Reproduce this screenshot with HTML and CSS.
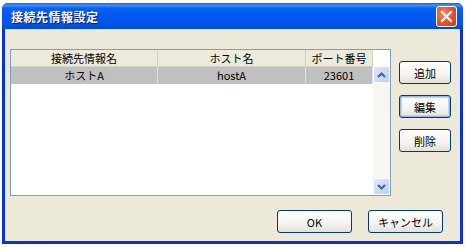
FILE: index.html
```html
<!DOCTYPE html>
<html lang="ja">
<head>
    <meta charset="UTF-8">
    <title>接続先情報設定</title>
    <link rel="stylesheet" href="styles.css">
</head>
<body>
    <div class="window">
        <div class="titlebar">
            <span class="title">接続先情報設定</span>
            <div class="close">
                <svg width="13" height="13" viewBox="0 0 13 13">
                    <path d="M2 2 L11 11 M11 2 L2 11" stroke="#fff" stroke-width="2.2" stroke-linecap="square"/>
                </svg>
            </div>
        </div>
        <div class="client">
            <div class="main">
                <div class="listview">
                    <div class="grid">
                        <div class="header">
                            <div class="col c1">接続先情報名</div>
                            <div class="col c2">ホスト名</div>
                            <div class="col c3">ポート番号</div>
                            <div class="col c4"></div>
                        </div>
                        <div class="row selected">
                            <div class="col c1">ホストA</div>
                            <div class="col c2">hostA</div>
                            <div class="col c3">23601</div>
                        </div>
                    </div>
                    <div class="scrollbar">
                        <div class="arrow">
                            <svg width="9" height="6" viewBox="0 0 9 6"><path d="M1 5 L4.5 1.5 L8 5" fill="none" stroke="#4d6185" stroke-width="2"/></svg>
                        </div>
                        <div class="track"></div>
                        <div class="arrow">
                            <svg width="9" height="6" viewBox="0 0 9 6"><path d="M1 1 L4.5 4.5 L8 1" fill="none" stroke="#4d6185" stroke-width="2"/></svg>
                        </div>
                    </div>
                </div>
                <div class="side">
                    <button class="btn">追加</button>
                    <button class="btn focus">編集</button>
                    <button class="btn">削除</button>
                </div>
            </div>
            <div class="footer">
                <button class="btn wide">OK</button>
                <button class="btn wide">キャンセル</button>
            </div>
        </div>
    </div>
</body>
</html>
```

FILE: styles.css
```css
body {
    margin: 0;
    padding: 3px 0 0 2px;
    background: #fff;
    font-family: "Noto Sans CJK JP", "Liberation Sans", sans-serif;
    font-size: 11px;
}
.window {
    width: 461px;
    height: 241px;
    background: #0831d9;
    border-radius: 6px 6px 0 0;
    display: flex;
    flex-direction: column;
    box-sizing: border-box;
    padding: 0 3px 3px 3px;
}
.titlebar {
    height: 26px;
    margin: 0 -3px;
    padding: 0 6px 0 9px;
    border-radius: 6px 6px 0 0;
    background: linear-gradient(to bottom, #0a5feb 0%, #3d95ff 8%, #0a62f2 20%, #0058ee 50%, #0055e5 80%, #0048d1 100%);
    display: flex;
    align-items: center;
    justify-content: space-between;
}
.title {
    color: #fff;
    font-weight: bold;
    font-size: 12px;
    text-shadow: 1px 1px 0 #0a1883;
    letter-spacing: 0.5px;
}
.close {
    width: 21px;
    height: 21px;
    box-sizing: border-box;
    border: 1px solid #fff;
    border-radius: 3px;
    background: radial-gradient(circle at 35% 35%, #f08a6a 0%, #e0552f 50%, #c8381a 100%);
    display: flex;
    align-items: center;
    justify-content: center;
}
.client {
    flex: 1;
    background: #ece9d8;
    display: flex;
    flex-direction: column;
    padding: 20px 10px 8px 5px;
}
.main {
    display: flex;
    gap: 8px;
}
.listview {
    width: 381px;
    height: 147px;
    box-sizing: border-box;
    border: 1px solid #7f9db9;
    background: #fff;
    display: flex;
}
.grid {
    flex: 1;
}
.header, .row {
    display: flex;
}
.header {
    height: 17px;
    background: #ebeadb;
    border-bottom: 1px solid #d6d2c2;
    box-sizing: border-box;
}
.header .col {
    border-right: 1px solid #d6d2c2;
    line-height: 16px;
}
.col {
    text-align: center;
    color: #000;
    box-sizing: border-box;
}
.c1 { width: 147px; }
.c2 { width: 148px; }
.c3 { width: 67px; }
.c4 { flex: 1; border-right: none !important; }
.row {
    height: 17px;
    line-height: 16px;
}
.row .col {
    border-right: 1px solid #e0e0e0;
}
.selected {
    background: #c0c0c0;
}
.scrollbar {
    width: 17px;
    display: flex;
    flex-direction: column;
    background: #f7f6f1;
    margin-top: 16px;
}
.track {
    flex: 1;
}
.arrow {
    height: 17px;
    box-sizing: border-box;
    border: 1px solid #fff;
    border-radius: 2px;
    background: linear-gradient(to bottom right, #dde6fc, #bccefa);
    display: flex;
    align-items: center;
    justify-content: center;
}
.side {
    display: flex;
    flex-direction: column;
    gap: 11px;
    padding-top: 12px;
}
.btn {
    width: 52px;
    height: 23px;
    font-family: inherit;
    font-size: 11px;
    color: #000;
    border: 1px solid #003c74;
    border-radius: 3px;
    background: linear-gradient(to bottom, #ffffff 0%, #f4f3ee 60%, #e3e1d6 100%);
    padding: 0;
}
.btn.focus {
    box-shadow: inset 0 0 0 1px #98b8ea, inset 0 0 0 2px #bcd4f6;
}
.footer {
    margin-top: auto;
    display: flex;
    justify-content: flex-end;
    gap: 16px;
    padding-right: 7px;
}
.btn.wide {
    width: 75px;
}
```
